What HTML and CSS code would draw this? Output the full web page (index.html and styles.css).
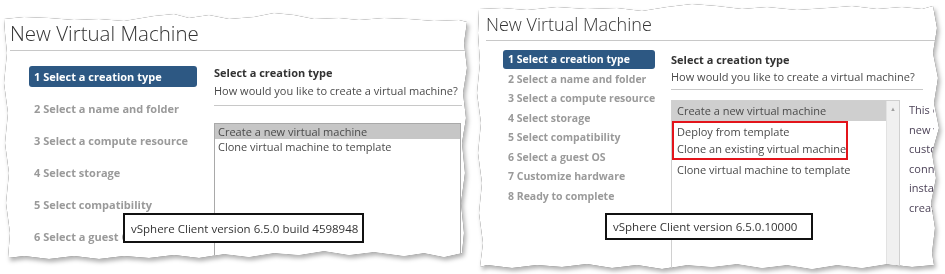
FILE: index.html
```html
<!DOCTYPE html>
<html lang="en">
<head>
    <meta charset="UTF-8">
    <title>New Virtual Machine - vSphere Client comparison</title>
    <link rel="stylesheet" href="styles.css">
</head>
<body>
    <div class="board">
        <!-- vSphere Client 6.5.0 (build 4598948) -->
        <div class="sheet sheet-old">
            <div class="paper paper-old">
                <div class="wizard-title">New Virtual Machine</div>
                <div class="wizard-body">
                    <ul class="steps">
                        <li class="step active">1 Select a creation type</li>
                        <li class="step">2 Select a name and folder</li>
                        <li class="step">3 Select a compute resource</li>
                        <li class="step">4 Select storage</li>
                        <li class="step">5 Select compatibility</li>
                        <li class="step">6 Select a guest OS</li>
                    </ul>
                    <div class="page">
                        <div class="page-head">
                            <div class="page-title">Select a creation type</div>
                            <div class="page-desc">How would you like to create a virtual machine?</div>
                        </div>
                        <div class="type-list">
                            <div class="type-row selected">Create a new virtual machine</div>
                            <div class="type-row">Clone virtual machine to template</div>
                        </div>
                    </div>
                </div>
                <div class="version-note">vSphere Client version 6.5.0 build 4598948</div>
            </div>
        </div>

        <!-- vSphere Client 6.5.0.10000 -->
        <div class="sheet sheet-new">
            <div class="paper paper-new">
                <div class="wizard-title">New Virtual Machine</div>
                <div class="wizard-body">
                    <ul class="steps">
                        <li class="step active">1 Select a creation type</li>
                        <li class="step">2 Select a name and folder</li>
                        <li class="step">3 Select a compute resource</li>
                        <li class="step">4 Select storage</li>
                        <li class="step">5 Select compatibility</li>
                        <li class="step">6 Select a guest OS</li>
                        <li class="step">7 Customize hardware</li>
                        <li class="step">8 Ready to complete</li>
                    </ul>
                    <div class="page">
                        <div class="page-head">
                            <div class="page-title">Select a creation type</div>
                            <div class="page-desc">How would you like to create a virtual machine?</div>
                        </div>
                        <div class="page-split">
                            <div class="type-list">
                                <div class="type-rows">
                                    <div class="type-row selected">Create a new virtual machine</div>
                                    <div class="type-group">
                                        <div class="type-row">Deploy from template</div>
                                        <div class="type-row">Clone an existing virtual machine</div>
                                    </div>
                                    <div class="type-row">Clone virtual machine to template</div>
                                </div>
                                <div class="scrollbar"><span class="scroll-up">&#9650;</span></div>
                            </div>
                            <div class="type-help">
                                <div>This option guides you through creating a</div>
                                <div>new virtual machine. You will be able to</div>
                                <div>customize processors, memory, network</div>
                                <div>connections, and storage. You will need to</div>
                                <div>install a guest operating system after</div>
                                <div>creating the virtual machine.</div>
                            </div>
                        </div>
                    </div>
                </div>
                <div class="version-note">vSphere Client version 6.5.0.10000</div>
            </div>
        </div>
    </div>
</body>
</html>
```

FILE: styles.css
```css
html, body {
    margin: 0;
    padding: 0;
    background: #ffffff;
}
body {
    font-family: 'Open Sans', 'Liberation Sans', sans-serif;
    color: #4a4a4a;
}
.board {
    display: flex;
    align-items: flex-start;
    padding: 3px 0 0 4px;
    gap: 7px;
    width: 945px;
    height: 274px;
    box-sizing: border-box;
    overflow: hidden;
}

/* torn paper pieces */
.sheet {
    filter: drop-shadow(0 0 0.6px rgba(0, 0, 0, 0.75)) drop-shadow(2px 3px 2px rgba(0, 0, 0, 0.3));
}
.sheet-old {
    margin-top: 10px;
}
.paper {
    position: relative;
    background: #ffffff;
    box-sizing: border-box;
    overflow: hidden;
}
.paper-old {
    width: 466px;
    height: 250px;
    padding: 8px 0 0 6px;
    clip-path: polygon(0 6px, 20px 4px, 45px 5px, 70px 7px, 95px 6px, 120px 8px, 150px 3px, 170px 1px, 185px 5px, 205px 2px, 225px 6px, 250px 4px, 270px 0, 290px 2px, 310px 6px, 335px 5px, 355px 7px, 380px 5px, 405px 6px, 430px 8px, 455px 7px, 463px 9px, 460px 30px, 463px 55px, 459px 80px, 462px 105px, 458px 130px, 461px 160px, 457px 190px, 460px 220px, 458px 240px, 440px 244px, 420px 240px, 400px 243px, 370px 239px, 345px 242px, 320px 238px, 295px 242px, 270px 240px, 245px 244px, 220px 241px, 195px 245px, 170px 242px, 145px 245px, 120px 243px, 95px 246px, 70px 243px, 45px 246px, 20px 243px, 4px 245px, 6px 220px, 2px 190px, 5px 160px, 1px 130px, 4px 100px, 0 70px, 3px 40px, 1px 20px);
}
.paper-new {
    width: 464px;
    height: 268px;
    padding: 10px 0 0 9px;
    clip-path: polygon(2px 6px, 25px 5px, 50px 7px, 80px 4px, 110px 6px, 140px 5px, 165px 8px, 190px 4px, 215px 1px, 240px 3px, 265px 6px, 290px 4px, 320px 7px, 350px 5px, 375px 3px, 400px 6px, 425px 4px, 445px 6px, 456px 3px, 460px 25px, 456px 50px, 461px 75px, 457px 100px, 462px 125px, 455px 150px, 459px 175px, 454px 200px, 458px 225px, 455px 250px, 457px 262px, 435px 264px, 410px 261px, 385px 265px, 360px 262px, 335px 266px, 310px 262px, 285px 265px, 260px 261px, 235px 264px, 210px 262px, 185px 266px, 160px 262px, 135px 265px, 110px 261px, 85px 264px, 60px 262px, 35px 265px, 10px 262px, 3px 264px, 6px 240px, 2px 210px, 5px 180px, 1px 150px, 4px 120px, 0 90px, 3px 60px, 1px 30px);
}

/* wizard header */
.wizard-title {
    font-weight: 300;
    color: #333333;
    border-bottom: 1px solid #c8c8c8;
}
.paper-old .wizard-title {
    font-size: 20.5px;
    line-height: 24px;
    padding-bottom: 5px;
    margin-right: 4px;
}
.paper-new .wizard-title {
    font-size: 18px;
    line-height: 22px;
    padding-bottom: 5px;
    margin-right: 5px;
}

.wizard-body {
    display: flex;
    align-items: flex-start;
}
.paper-old .wizard-body {
    padding: 15px 0 0 19px;
    gap: 17px;
}
.paper-new .wizard-body {
    padding: 9px 0 0 17px;
    gap: 16px;
}

/* steps */
.steps {
    list-style: none;
    margin: 0;
    padding: 0;
    display: flex;
    flex-direction: column;
    flex-shrink: 0;
}
.step {
    color: #9a9a9a;
    font-weight: 700;
    white-space: nowrap;
    padding: 0 5px;
    border-radius: 3px;
}
.step.active {
    color: #ffffff;
    background: #2d5883;
}
.paper-old .steps {
    width: 168px;
    gap: 11px;
}
.paper-old .step {
    font-size: 11px;
    line-height: 21px;
}
.paper-new .steps {
    width: 152px;
    gap: 0.5px;
}
.paper-new .step {
    font-size: 10.5px;
    line-height: 19px;
}

/* creation type page */
.page {
    flex: 1;
    min-width: 0;
}
.page-head {
    border-bottom: 1px solid #c8c8c8;
}
.page-title {
    font-weight: 700;
    color: #333333;
    white-space: nowrap;
}
.page-desc {
    white-space: nowrap;
}
.paper-old .page {
    margin-right: 9px;
}
.paper-old .page-head {
    font-size: 11px;
    line-height: 18px;
    padding-bottom: 5px;
    margin-top: -2px;
    margin-right: -1px;
}
.paper-new .page-head {
    font-size: 11px;
    line-height: 17px;
    padding-bottom: 4px;
    margin-top: 1px;
    margin-right: 18px;
}

.type-list {
    border: 1px solid #a9a9a9;
    border-bottom: none;
    background: #ffffff;
}
.type-row {
    white-space: nowrap;
    font-size: 11px;
}
.type-row.selected {
    background: #c6c6c6;
}
.paper-old .type-list {
    margin-top: 17px;
    height: 140px;
}
.paper-old .type-row {
    line-height: 15px;
    padding-left: 3px;
}

.page-split {
    display: flex;
    align-items: flex-start;
    gap: 9px;
    margin-top: 10px;
}
.paper-new .type-list {
    display: flex;
    width: 229px;
    height: 170px;
    box-sizing: border-box;
    border-color: #d0d0d0;
    flex-shrink: 0;
}
.type-rows {
    flex: 1;
}
.paper-new .type-row {
    line-height: 19.5px;
    padding-left: 5px;
}
.paper-new .type-row.selected {
    background: #cfcfcf;
}
.type-group {
    width: 176px;
    border: 2px solid #e3141b;
    box-sizing: border-box;
}
.type-group .type-row {
    line-height: 17.5px;
    padding-left: 3px;
}
.scrollbar {
    width: 12px;
    background: #f0f0f0;
    border-left: 1px solid #e2e2e2;
    text-align: center;
}
.scroll-up {
    display: block;
    font-size: 6px;
    line-height: 16px;
    color: #a0a0a0;
}
.type-help {
    width: 25px;
    overflow: hidden;
    font-size: 11px;
    line-height: 19.5px;
    white-space: nowrap;
    color: #4d4358;
}

/* version callouts */
.version-note {
    position: absolute;
    background: #ffffff;
    border: 2px solid #111111;
    box-sizing: border-box;
    font-size: 11.5px;
    color: #333333;
    white-space: nowrap;
    display: flex;
    align-items: center;
}
.paper-old .version-note {
    left: 119px;
    top: 200px;
    width: 241px;
    height: 30px;
    padding-left: 6px;
}
.paper-new .version-note {
    left: 128px;
    top: 210px;
    width: 208px;
    height: 27px;
    padding-left: 6px;
}
```
